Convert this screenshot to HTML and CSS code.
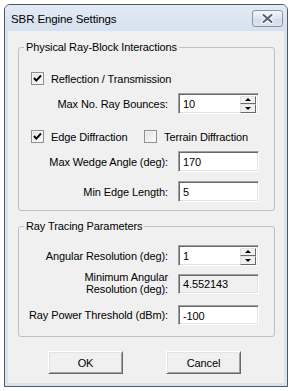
FILE: index.html
```html
<!DOCTYPE html>
<html>

<head>
    <meta charset="utf-8" />
    <title>SBR Engine Settings</title>
    <link rel="stylesheet" href="styles.css">
</head>

<body>
    <div class="window">
        <div class="titlebar">
            <span class="title">SBR Engine Settings</span>
            <button class="closeBtn">
                <svg width="13" height="11" viewBox="0 0 13 11">
                    <path d="M2.5 2 L10.5 9 M10.5 2 L2.5 9" stroke="#f6f8fb" stroke-width="4.5" stroke-linecap="round" />
                    <path d="M2.5 2 L10.5 9 M10.5 2 L2.5 9" stroke="#59636f" stroke-width="2" stroke-linecap="round" />
                </svg>
            </button>
        </div>
        <div class="client">
            <fieldset class="group groupPhys">
                <legend>Physical Ray-Block Interactions</legend>
                <div class="checkRow rowReflect">
                    <label class="check"><span class="box"><svg width="11" height="11" viewBox="0 0 11 11"><path d="M2 5 L4.3 7.6 L9 2.5" fill="none" stroke="#000" stroke-width="1.9" /></svg></span>Reflection / Transmission</label>
                </div>
                <div class="fieldRow rowBounces">
                    <span class="lbl">Max No. Ray Bounces:</span>
                    <div class="edit spin">
                        <span class="val">10</span>
                        <div class="spinBtns">
                            <span class="spinBtn"><i class="arrowUp"></i></span>
                            <span class="spinBtn"><i class="arrowDown"></i></span>
                        </div>
                    </div>
                </div>
                <div class="checkRow rowDiffr">
                    <label class="check checkEdge"><span class="box"><svg width="11" height="11" viewBox="0 0 11 11"><path d="M2 5 L4.3 7.6 L9 2.5" fill="none" stroke="#000" stroke-width="1.9" /></svg></span>Edge Diffraction</label>
                    <label class="check"><span class="box"></span>Terrain Diffraction</label>
                </div>
                <div class="fieldRow rowWedge">
                    <span class="lbl">Max Wedge Angle (deg):</span>
                    <div class="edit"><span class="val">170</span></div>
                </div>
                <div class="fieldRow rowEdgeLen">
                    <span class="lbl">Min Edge Length:</span>
                    <div class="edit"><span class="val">5</span></div>
                </div>
            </fieldset>

            <fieldset class="group groupRay">
                <legend>Ray Tracing Parameters</legend>
                <div class="fieldRow rowAngular">
                    <span class="lbl">Angular Resolution (deg):</span>
                    <div class="edit spin">
                        <span class="val">1</span>
                        <div class="spinBtns">
                            <span class="spinBtn"><i class="arrowUp"></i></span>
                            <span class="spinBtn"><i class="arrowDown"></i></span>
                        </div>
                    </div>
                </div>
                <div class="fieldRow rowMinAng">
                    <span class="lbl twoLine">Minimum Angular<br>Resolution (deg):</span>
                    <div class="edit readonly"><span class="val">4.552143</span></div>
                </div>
                <div class="fieldRow rowPower">
                    <span class="lbl">Ray Power Threshold (dBm):</span>
                    <div class="edit short"><span class="val">-100</span></div>
                </div>
            </fieldset>

            <div class="buttons">
                <button class="btn">OK</button>
                <button class="btn">Cancel</button>
            </div>
        </div>
    </div>
</body>

</html>
```

FILE: styles.css
```css
* {
    box-sizing: border-box;
}

body {
    margin: 0px;
    background-color: #ffffff;
    font-family: "Liberation Sans", Arial, sans-serif;
    font-size: 11px;
    letter-spacing: -0.1px;
    color: #000000;
}

.window {
    margin: 4px 0px 0px 4px;
    width: 284px;
    height: 383px;
    border: 1px solid #50565d;
    border-radius: 6px 6px 0px 0px;
    background-color: #dae4f1;
    display: flex;
    flex-direction: column;
}

.titlebar {
    height: 26px;
    flex: none;
    display: flex;
    align-items: center;
    justify-content: space-between;
    padding: 0px 4px 0px 6px;
    border-radius: 5px 5px 0px 0px;
    background: linear-gradient(to bottom, #e2eaf5, #d6e1ef);
}

.title {
    font-size: 11.5px;
    color: #000000;
    margin-top: 1px;
}

.closeBtn {
    width: 31px;
    height: 17px;
    margin-top: 1px;
    padding: 0px;
    border: 1px solid #8796ab;
    border-radius: 3px;
    background: linear-gradient(to bottom, #f3f6fa, #dde5ef 50%, #d3dce8 51%, #dbe3ee);
    display: flex;
    align-items: center;
    justify-content: center;
}

.client {
    flex: 1;
    margin: 0px 3px 3px 3px;
    background-color: #f0f0f0;
    padding: 9px 9px 0px 10px;
}

/* group boxes */
.group {
    margin: 0px;
    padding: 0px;
    border: 1px solid #bdc1c5;
    border-radius: 3px;
}

.group legend {
    margin-left: 5px;
    padding: 0px 2px;
    line-height: 14px;
}

.groupPhys {
    padding-top: 14px;
    padding-bottom: 8px;
}

.groupRay {
    margin-top: 8px;
    padding-top: 12px;
    padding-bottom: 11px;
}

/* checkbox rows */
.checkRow {
    height: 21px;
    display: flex;
    align-items: center;
    padding-left: 12px;
}

.check {
    display: flex;
    align-items: center;
    gap: 7px;
}

.checkEdge {
    width: 113px;
}

.box {
    width: 13px;
    height: 13px;
    border: 1px solid #8e8f8f;
    background: linear-gradient(135deg, #e0e2e5, #fbfbfb);
    box-shadow: inset 0px 0px 0px 1px #f4f4f4;
    display: flex;
    align-items: center;
    justify-content: center;
}

.rowBounces {
    margin-top: 4px;
}

.rowDiffr {
    margin-top: 12px;
}

.rowWedge {
    margin-top: 4px;
}

.rowEdgeLen {
    margin-top: 9px;
}

.rowMinAng {
    margin-top: 5px;
    align-items: end;
}

.rowPower {
    margin-top: 9px;
}

/* label + edit rows */
.fieldRow {
    display: grid;
    grid-template-columns: 149px 81px;
    column-gap: 10px;
    align-items: center;
}

.lbl {
    text-align: right;
    white-space: nowrap;
}

.twoLine {
    line-height: 12px;
    margin-bottom: 1px;
}

.edit {
    height: 21px;
    display: flex;
    align-items: center;
    background-color: #ffffff;
    border-top: 1px solid #a0a0a0;
    border-left: 1px solid #a0a0a0;
    border-bottom: 1px solid #ffffff;
    border-right: 1px solid #ffffff;
    box-shadow: inset 1px 1px 0px #696969, inset -1px -1px 0px #e3e3e3;
    padding: 2px 2px 1px 4px;
}

.readonly,
.short {
    height: 20px;
}

.readonly {
    background-color: #f0f0f0;
}

.val {
    flex: 1;
}

.spinBtns {
    width: 16px;
    height: 17px;
    display: flex;
    flex-direction: column;
}

.spinBtn {
    flex: 1;
    background-color: #f0f0f0;
    border-top: 1px solid #e3e3e3;
    border-left: 1px solid #e3e3e3;
    border-bottom: 1px solid #696969;
    border-right: 1px solid #696969;
    display: flex;
    align-items: center;
    justify-content: center;
}

.arrowUp,
.arrowDown {
    width: 0px;
    height: 0px;
    border-left: 3px solid transparent;
    border-right: 3px solid transparent;
}

.arrowUp {
    border-bottom: 3px solid #000000;
}

.arrowDown {
    border-top: 3px solid #000000;
}

/* OK / Cancel */
.buttons {
    margin-top: 14px;
    padding-left: 30px;
    display: flex;
    gap: 43px;
}

.btn {
    width: 75px;
    height: 23px;
    font-family: "Liberation Sans", Arial, sans-serif;
    font-size: 11px;
    letter-spacing: -0.1px;
    color: #000000;
    background-color: #f0f0f0;
    border-top: 1px solid #ffffff;
    border-left: 1px solid #ffffff;
    border-bottom: 1px solid #696969;
    border-right: 1px solid #696969;
    box-shadow: inset 1px 1px 0px #e3e3e3, inset -1px -1px 0px #a0a0a0;
    padding: 0px;
}
```
